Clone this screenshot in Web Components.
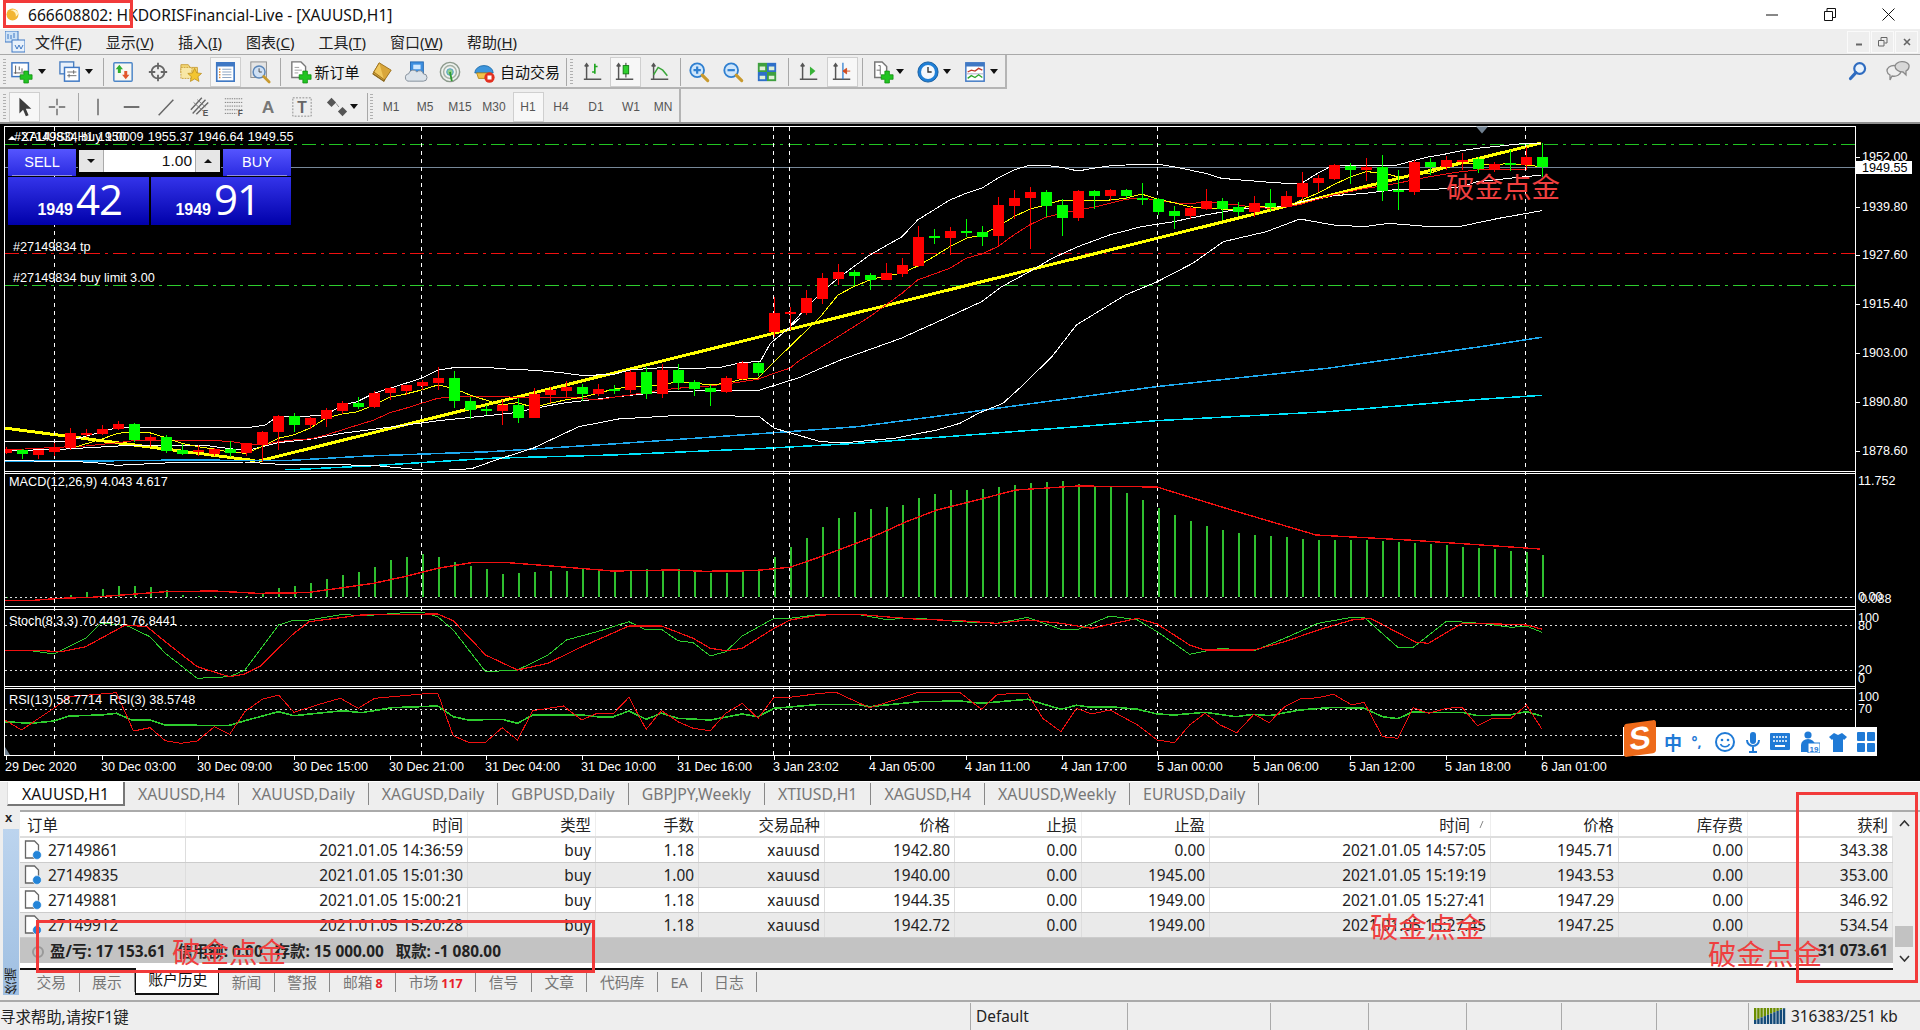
<!DOCTYPE html>
<html lang="zh">
<head>
<meta charset="utf-8">
<title>MetaTrader</title>
<style>
  html, body { margin: 0; height: 100%; background: #eeeeee; overflow: hidden; }
  body {
    position: relative;
    width: 1920px;
    height: 1030px;
    display: flex;
    flex-direction: column;
    font-family: "Noto Sans", "Noto Sans CJK SC", sans-serif;
  }
</style>
</head>
<body>
<mt-title-bar>666608802: HKDORISFinancial-Live - [XAUUSD,H1]</mt-title-bar>
<mt-menu-bar></mt-menu-bar>
<mt-toolbar row="main"></mt-toolbar>
<mt-toolbar row="tools"></mt-toolbar>
<mt-chart></mt-chart>
<mt-chart-tabs></mt-chart-tabs>
<mt-terminal></mt-terminal>
<mt-status-bar>寻求帮助,请按F1键</mt-status-bar>

<mt-ime-bar></mt-ime-bar>

<mt-mark style="left:3px;top:0;width:130px;height:28px"></mt-mark>
<mt-mark style="left:36px;top:920px;width:559px;height:53px"></mt-mark>
<mt-mark style="left:1796px;top:792px;width:122px;height:191px"></mt-mark>
<mt-stamp style="left:1446px;top:168px">破金点金</mt-stamp>
<mt-stamp style="left:172px;top:933px">破金点金</mt-stamp>
<mt-stamp style="left:1370px;top:908px">破金点金</mt-stamp>
<mt-stamp style="left:1708px;top:935px">破金点金</mt-stamp>

<script>
(function () {
  const UI_FONT = `"Noto Sans", "Noto Sans CJK SC", sans-serif`;
  const CHART_FONT = `"Liberation Sans", sans-serif`;

  // toolbar icons, all on a 24x24 box
  const axes = `<path d="M5 3v17M2 20h19M3 6l2-3 2 3" fill="none" stroke="#555" stroke-width="1.6"/>`;
  const plus = `<path d="M14 11h5v4h4v5h-4v4h-5v-4h-4v-5h4z" fill="#22c422" stroke="#0d8a0d" stroke-width=".8"/>`;
  const glass = (mark) => `<circle cx="10" cy="10" r="7.5" fill="#cfe6fb" stroke="#2f7fd0" stroke-width="2"/>${mark}<path d="M15.5 15.5l6 6" stroke="#c99a2e" stroke-width="3.4" stroke-linecap="round"/>`;
  const Icons = {
    newChart: `<rect x="1" y="2" width="18" height="15" fill="#fff" stroke="#3f78c4" stroke-width="1.6"/><path d="M5 5v9M3 13h13M9 6v4M12 8v4" stroke="#555"/>${plus}`,
    profiles: `<rect x="1" y="1" width="15" height="13" fill="#e9f1fb" stroke="#4a7fc0" stroke-width="1.5"/><rect x="6" y="7" width="16" height="15" fill="#fff" stroke="#3f78c4" stroke-width="1.6"/><path d="M9 12h10M9 16h10M16 10v4M11 14v4" stroke="#666"/>`,
    market: `<rect x="2" y="2" width="20" height="20" rx="1" fill="#f7f7f2" stroke="#4c86c8" stroke-width="1.6"/><path d="M8 4l4 5H9.6v4H6.4V9H4z" fill="#2fae2f"/><path d="M15 20l-4-5h2.4v-4h3.2v4H19z" fill="#e2562a"/>`,
    navigator: `<circle cx="12" cy="12" r="7" fill="none" stroke="#666" stroke-width="2"/><path d="M12 2v7M12 15v7M2 12h7M15 12h7" stroke="#666" stroke-width="2"/>`,
    favorites: `<path d="M1 4h8l2 3h8v6H1z" fill="#f3d774" stroke="#c9a03a"/><path d="M1 7h12v12H1z" fill="#f8e7a5" stroke="#c9a03a" stroke-dasharray="2 1"/><path d="M16 8l2.3 5 5.2.6-3.9 3.5 1.1 5.2-4.7-2.7-4.7 2.7 1.1-5.2-3.9-3.5 5.2-.6z" fill="#f3c531" stroke="#b98b1a" stroke-width=".8"/>`,
    terminal: `<rect x="3" y="2" width="19" height="20" fill="#fff" stroke="#3f78c4" stroke-width="1.8"/><rect x="3" y="2" width="19" height="4" fill="#3f78c4"/><path d="M9 9h10M9 12h10M9 15h10M9 18h10" stroke="#8ea6c4" stroke-width="1.2"/><path d="M5.5 9h1.5M5.5 12h1.5M5.5 15h1.5M5.5 18h1.5" stroke="#d9822b" stroke-width="1.4"/>`,
    tester: `<rect x="2" y="1" width="17" height="17" fill="#e4e4e4" stroke="#8a8a8a"/><circle cx="11" cy="12" r="6.5" fill="#cfe0f4" stroke="#5b86b8" stroke-width="1.6"/><path d="M11 8v4h3" stroke="#444" fill="none"/><path d="M16 17l6 6" stroke="#c99a2e" stroke-width="3" stroke-linecap="round"/>`,
    order: `<path d="M2 1h10l5 5v12H2z" fill="#fff" stroke="#777" stroke-width="1.5"/><path d="M5 7h5M5 10h8M5 13h4" stroke="#999"/>${plus}`,
    book: `<path d="M9 2l13 8-8 12-12-8z" fill="#d9a63a" stroke="#9a6f1a"/><path d="M9 2L3 12l11 8" fill="#f0c75c" stroke="#9a6f1a"/><path d="M2 14l12 8 1-2" fill="none" stroke="#8a6a22" stroke-width="1.4"/>`,
    cloud: `<rect x="6" y="1" width="14" height="14" fill="#3d8fe0" stroke="#2468b0"/><rect x="9" y="4" width="8" height="5" fill="#cfe8ff"/><path d="M5 22a4 4 0 0 1-1-8 5 5 0 0 1 9-2 4 4 0 0 1 7 2 4 4 0 0 1 0 8z" fill="#dce3ea" stroke="#7f8a96"/>`,
    signal: `<circle cx="12" cy="12" r="10.5" fill="#eef1ee" stroke="#8d9a8d" stroke-width="1.6"/><circle cx="12" cy="12" r="7" fill="none" stroke="#a5b1a5" stroke-width="1.6"/><circle cx="12" cy="12" r="3.6" fill="#8fd08f" stroke="#4e9ad0"/><path d="M12 12l2 10" stroke="#2f9a2f" stroke-width="2"/>`,
    auto: `<path d="M2 13a10 8 0 0 1 20 0z" fill="#3c95dc" stroke="#1f6cab"/><path d="M4 13h16l-2 6H6z" fill="#f2c24a" stroke="#b48a1e"/><circle cx="18" cy="18" r="5.6" fill="#e33020"/><rect x="15.8" y="15.8" width="4.4" height="4.4" fill="#fff"/>`,
    bars: `${axes}<path d="M14 3v11M11 12h3M14 6h3" stroke="#22a622" stroke-width="1.8" fill="none"/>`,
    candle: `${axes}<path d="M13 2v16" stroke="#222"/><rect x="10" y="5" width="6" height="9" fill="#2fd02f" stroke="#107a10"/>`,
    line: `${axes}<path d="M5 15l5-8 5 3 5 6" fill="none" stroke="#3aa63a" stroke-width="1.6"/>`,
    zoomIn: glass(`<path d="M6 10h8M10 6v8" stroke="#2f7fd0" stroke-width="2.4"/>`),
    zoomOut: glass(`<path d="M6 10h8" stroke="#2f7fd0" stroke-width="2.4"/>`),
    tile: `<rect x="2" y="2" width="10" height="10" fill="#3fa03f"/><rect x="12" y="2" width="10" height="10" fill="#2e6fc9"/><rect x="2" y="12" width="10" height="10" fill="#2e6fc9"/><rect x="12" y="12" width="10" height="10" fill="#3fa03f"/><path d="M4 6h6v4H4zM14 6h6v4h-6zM4 16h6v4H4zM14 16h6v4h-6z" fill="#dff0d8"/>`,
    scroll: `${axes}<path d="M13 6l6 5-6 5z" fill="#37b237"/>`,
    shift: `${axes}<path d="M13 2v18" stroke="#2f7fd0" stroke-width="1.4"/><path d="M21 11h-4v-3l-4 3 4 3v-3" fill="#cf4a1e" stroke="#cf4a1e"/>`,
    addInd: `<path d="M3 1h8l5 5v12H3z" fill="#fff" stroke="#777" stroke-width="1.6"/><path d="M7 5h2v10M5 10h4" stroke="#666" fill="none"/>${plus}`,
    clock: `<circle cx="12" cy="12" r="11" fill="#1f7fd6" stroke="#135a9c"/><circle cx="12" cy="12" r="7.6" fill="#f4f8fc"/><path d="M12 6.5V12h4" stroke="#333" stroke-width="1.5" fill="none"/>`,
    template: `<rect x="2" y="2" width="20" height="20" fill="#fff" stroke="#3f78c4" stroke-width="1.6"/><rect x="2" y="2" width="20" height="4" fill="#3f78c4"/><path d="M4 12l4-2 4 1 4-3 4 2" stroke="#c0392b" fill="none" stroke-width="1.5"/><path d="M2 14h20" stroke="#aac"/><path d="M4 19l4-3 4 2 4-3 4 3" stroke="#2fa82f" fill="none" stroke-width="1.5"/>`,
    cursor: `<path d="M7 2v17l4-4 3 7 3-1-3-7h6z" fill="#3c3c3c"/>`,
    cross: `<path d="M12 3v7M12 14v7M3 12h7M14 12h7" stroke="#666" stroke-width="1.5"/>`,
    vline: `<path d="M12 3v18" stroke="#666" stroke-width="1.6"/>`,
    hline: `<path d="M3 12h17" stroke="#555" stroke-width="1.8"/>`,
    trend: `<path d="M4 21L20 4" stroke="#666" stroke-width="1.6"/>`,
    channel: `<path d="M2 15L14 2M4 19L18 4M8 20L21 7" stroke="#666" stroke-width="1.5"/><path d="M5 7l10 9M9 4l9 8" stroke="#777"/><text x="15" y="22" font-size="9" font-weight="700" fill="#555" font-family="Liberation Sans">E</text>`,
    fibo: `<path d="M2 3h20M2 7h20M2 11h20M2 15h20" stroke="#777" stroke-dasharray="1.5 1"/><path d="M2 19h13" stroke="#777" stroke-dasharray="1.5 1"/><text x="16" y="22" font-size="9" font-weight="700" fill="#555" font-family="Liberation Sans">F</text>`,
    label: `<rect x="2" y="2" width="20" height="20" fill="none" stroke="#888" stroke-dasharray="2 1.5"/><text x="12" y="18" text-anchor="middle" font-size="17" font-weight="700" fill="#666" font-family="Liberation Sans">T</text>`,
    letter: `<text x="12" y="19" text-anchor="middle" font-size="19" font-weight="700" fill="#777" font-family="Liberation Sans">A</text>`,
    arrows: `<path d="M6 2l5 5-5 5-5-5z" fill="#555"/><path d="M18 12l5 5-5 5-5-5z" fill="#555"/><path d="M11 8l3 4" stroke="#888"/>`,
    search: `<circle cx="14" cy="9" r="6.5" fill="#eaf3fc" stroke="#2f6cc0" stroke-width="2.6"/><path d="M9.5 14L3 21" stroke="#2f6cc0" stroke-width="3.8" stroke-linecap="round"/>`,
    chat: `<path d="M2 12a7 5.5 0 0 1 14 0 7 5.5 0 0 1-9 5l-2 4v-5a5 5 0 0 1-3-4z" fill="#eee" stroke="#8a8a8a" stroke-width="1.3"/><path d="M12 8a7.5 6 0 0 1 14-1 6 6 0 0 1-3 6v4l-3-3a8 6 0 0 1-8-6z" fill="#d8d8d8" stroke="#8a8a8a" stroke-width="1.3" transform="translate(-2 -1)"/>`,
  };

  class TitleBar extends HTMLElement {
    constructor() {
      super();
      this.attachShadow({ mode: "open" }).innerHTML = `
        <style>
          :host { display: flex; align-items: center; height: 29px; background: #fff; color: #111; font: 15.6px ${UI_FONT}; flex: none; }
          svg { margin: 0 9px 0 6px; }
          .text { flex: 1; white-space: nowrap; }
          .btn { width: 58px; height: 29px; display: flex; align-items: center; justify-content: center; }
          .controls { display: flex; margin-right: 3px; }
        </style>
        <svg width="13" height="15" viewBox="0 0 12 14"><circle cx="6" cy="7" r="5.6" fill="#f2b632"/><path d="M4 3a5 5 0 0 1 5 6 4 3 0 0 0-5-6z" fill="#fff3c4"/></svg>
        <div class="text"><slot></slot></div>
        <div class="controls">
          <div class="btn"><svg style="margin:0" width="12" height="2"><path d="M0 1h12" stroke="#111"/></svg></div>
          <div class="btn"><svg style="margin:0" width="12" height="13"><path d="M.5 3.5h8v9h-8zM3 3V.5h8.5v9H9" fill="none" stroke="#111"/></svg></div>
          <div class="btn"><svg style="margin:0" width="13" height="13"><path d="M.5.5l12 12M12.5.5l-12 12" stroke="#111"/></svg></div>
        </div>`;
    }
  }

  class MenuBar extends HTMLElement {
    constructor() {
      super();
      const menus = [["文件", "F"], ["显示", "V"], ["插入", "I"], ["图表", "C"], ["工具", "T"], ["窗口", "W"], ["帮助", "H"]];
      this.attachShadow({ mode: "open" }).innerHTML = `
        <style>
          :host { display: flex; align-items: center; height: 25px; background: #eeeeee; color: #222; font: 15px ${UI_FONT}; flex: none; }
          .logo { margin: 0 10px 0 5px; }
          nav { display: flex; gap: 24px; flex: 1; }
          u { text-decoration-thickness: 1px; }
          .mdi { display: flex; gap: 1px; margin-right: 2px; }
          .mdi div { width: 23px; height: 22px; border: 1px solid #fafafa; box-sizing: border-box; display: flex; align-items: center; justify-content: center; }
        </style>
        <svg class="logo" width="20" height="22" viewBox="0 0 20 22"><rect x="0" y="0" width="13" height="11" fill="#cfe3f7" stroke="#3f78c4"/><rect x="7" y="9" width="13" height="12" fill="#e8f1fb" stroke="#3f78c4"/><path d="M3 3v5M6 4v4M9 2v5M10 14l2 4 2-4 2 4 2-4" stroke="#3f78c4" fill="none"/></svg>
        <nav>${menus.map(([name, key]) => `<span>${name}(<u>${key}</u>)</span>`).join("")}</nav>
        <div class="mdi">
          <div><svg width="8" height="8"><path d="M1 6.5h6" stroke="#666" stroke-width="2"/></svg></div>
          <div><svg width="10" height="10"><path d="M.5 3.5h5.5v5.5H.5zM3 3V.5h6v5.5H6.5" fill="none" stroke="#666"/></svg></div>
          <div><svg width="8" height="8"><path d="M1 1l6 6M7 1L1 7" stroke="#666" stroke-width="1.6"/></svg></div>
        </div>`;
    }
  }

  // k: kind, c: centre x on the page
  const ToolRows = {
    main: {
      end: 1007,
      items: [
        { k: "grip", c: 4 }, { i: "newChart", c: 22 }, { k: "arrow", c: 42 }, { i: "profiles", c: 70 }, { k: "arrow", c: 89 },
        { k: "sep", c: 103 }, { i: "market", c: 123 }, { i: "navigator", c: 158 }, { i: "favorites", c: 191 }, { i: "terminal", c: 225, on: 1 },
        { i: "tester", c: 260 }, { k: "sep", c: 280 }, { i: "order", c: 301 }, { t: "新订单", w: 46, c: 337 }, { i: "book", c: 382 },
        { i: "cloud", c: 416 }, { i: "signal", c: 450 }, { i: "auto", c: 484 }, { t: "自动交易", w: 60, c: 530 }, { k: "sep", c: 566 }, { k: "grip", c: 571 },
        { i: "bars", c: 593 }, { i: "candle", c: 625, on: 1 }, { i: "line", c: 660 }, { k: "sep", c: 680 }, { i: "zoomIn", c: 699 }, { i: "zoomOut", c: 733 },
        { i: "tile", c: 767 }, { k: "sep", c: 788 }, { i: "scroll", c: 809 }, { i: "shift", c: 842, on: 1 }, { k: "sep", c: 862 }, { i: "addInd", c: 883 },
        { k: "arrow", c: 900 }, { i: "clock", c: 928 }, { k: "arrow", c: 947 }, { i: "template", c: 975 }, { k: "arrow", c: 994 },
      ],
    },
    tools: {
      end: 681,
      items: [
        { k: "grip", c: 4 }, { i: "cursor", c: 24, on: 1 }, { i: "cross", c: 57 }, { k: "sep", c: 78 }, { i: "vline", c: 98 }, { i: "hline", c: 132 },
        { i: "trend", c: 166 }, { i: "channel", c: 200 }, { i: "fibo", c: 234 }, { i: "letter", c: 268 }, { i: "label", c: 302 }, { i: "arrows", c: 337 },
        { k: "arrow", c: 354 }, { k: "sep", c: 367 }, { k: "grip", c: 371 }, { p: "M1", c: 391 }, { p: "M5", c: 425 }, { p: "M15", c: 460 }, { p: "M30", c: 494 },
        { p: "H1", c: 528, on: 1 }, { p: "H4", c: 561 }, { p: "D1", c: 596 }, { p: "W1", c: 631 }, { p: "MN", c: 663 },
      ],
    },
  };
  const KIND_WIDTH = { sep: 1, grip: 3, arrow: 8 };

  class Toolbar extends HTMLElement {
    connectedCallback() {
      const row = ToolRows[this.getAttribute("row")];
      const isMain = this.getAttribute("row") === "main";
      let right = 0;
      const cells = row.items.map((item) => {
        const width = item.on ? 31 : item.w || KIND_WIDTH[item.k] || (item.p ? 26 : 22);
        const margin = item.c - width / 2 - right;
        right = item.c + width / 2;
        return `<div class="cell" style="width:${width}px;margin-left:${margin}px">${this._item(item)}</div>`;
      });
      this.attachShadow({ mode: "open" }).innerHTML = `
        <style>
          :host { display: flex; flex: none; height: 35px; background: #eeeeee; box-sizing: border-box; ${isMain ? "border-top: 1px solid #a9a9a9;" : "border-bottom: 2px solid #8f8f8f;"} }
          .band { display: flex; width: ${row.end}px; border-right: 2px solid #b4b4b4; border-bottom: ${isMain ? "2px solid #b4b4b4" : "0"}; padding-top: ${isMain ? 1 : 2}px; box-sizing: border-box; }
          .cell { display: flex; align-items: center; justify-content: center; flex: none; }
          svg { overflow: visible; }
          .on { width: 31px; height: 30px; display: flex; align-items: center; justify-content: center; border: 1px solid #cfcfcf; background: #f7f7f7; box-sizing: border-box; }
          .sep { width: 1px; height: 28px; background: #a8a8a8; }
          .grip { width: 3px; height: 26px; background: repeating-linear-gradient(#b0b0b0 0 1px, transparent 1px 3px); }
          .arrow { width: 0; height: 0; border: 4px solid transparent; border-top: 5px solid #111; border-bottom: 0; }
          .label { font: 15px ${UI_FONT}; color: #111; white-space: nowrap; }
          .period { font: 12px ${CHART_FONT}; color: #555; }
          .right { margin-left: auto; display: flex; gap: 17px; align-items: center; padding: 0 9px 2px 0; }
        </style>
        <div class="band">${cells.join("")}</div>
        ${isMain ? `<div class="right"><svg width="20" height="20" viewBox="0 0 24 24">${Icons.search}</svg><svg width="26" height="24" viewBox="0 0 26 24">${Icons.chat}</svg></div>` : ""}`;
    }

    _item(item) {
      if (item.k === "sep") return `<div class="sep"></div>`;
      if (item.k === "grip") return `<div class="grip"></div>`;
      if (item.k === "arrow") return `<div class="arrow"></div>`;
      if (item.t) return `<span class="label">${item.t}</span>`;
      const inner = item.p
        ? `<span class="period">${item.p}</span>`
        : `<svg width="22" height="22" viewBox="0 0 24 24">${Icons[item.i]}</svg>`;
      return item.on ? `<div class="on">${inner}</div>` : inner;
    }
  }

  // candles read off the reference: [green, high, top, bottom, low] in crop rows
  const CANDLES_A = [
    [0,470,478,490,493],[1,478,480,492,507],[0,480,481,495,507],[0,460,471,486,498],[0,414,430,476,480],[0,418,430,436,440],
    [0,405,417,432,434],[0,393,402,417,420],[1,400,402,451,455],[0,435,442,452,472],[1,436,442,483,488],[1,462,480,492,496],
    [0,465,481,483,498],[0,474,477,492,497],[1,453,477,489,502],[0,458,460,489,498],[0,422,427,465,516],[0,376,378,426,480],
    [1,369,378,405,426],[0,380,384,405,417],[0,355,360,387,410],[0,334,339,363,372],[1,322,339,351,358],[0,303,309,351,354],
    [0,290,294,309,330],[0,285,285,303,315],[0,270,276,288,300],[0,230,264,279,300],[1,243,264,333,354],[1,320,333,360,387],
    [1,345,358,362,375],[0,330,345,363,405],[1,325,345,384,399],[0,294,312,384,384],[0,292,300,315,340],[0,273,291,303,325],
    [1,282,291,312,334],[0,282,297,312,318],[1,285,297,300,312],[0,240,245,300,310],[1,232,246,312,327],[0,222,240,312,324],
    [1,222,240,279,300],[1,270,276,297,318],[1,285,294,306,348],[0,258,264,306,309],[0,213,219,267,270],[1,217,219,249,258],
  ].map((c) => [c[0], ...c.slice(1).map((v) => 290 + v / 3)]);
  const CANDLES_B = [
    [0,500,549,605,620],[0,530,546,552,600],[0,480,504,549,555],[0,430,444,507,522],[0,402,426,447,465],[1,420,426,438,468],
    [1,430,435,450,480],[0,400,429,450,450],[0,385,405,432,441],[0,288,321,408,410],[1,297,318,324,342],[0,292,303,324,375],
    [1,267,303,309,321],[1,288,306,321,348],[0,201,225,318,350],[0,180,204,228,267],[0,171,186,204,357],[1,180,186,228,261],
    [1,207,225,264,318],[0,180,183,264,273],[1,180,183,198,237],[0,177,180,198,213],[1,177,180,198,207],[1,159,204,209,225],
    [1,204,207,246,255],[1,228,243,258,297],[0,228,234,258,267],[0,177,213,237,240],[1,204,213,237,270],[1,216,231,246,258],
    [0,197,219,246,261],[1,177,219,231,243],[0,183,198,231,235],[0,126,159,201,210],[0,135,144,159,187],[0,102,105,147,150],
    [1,99,108,120,162],[0,84,111,120,153],[1,75,111,183,213],[1,120,180,186,240],[0,90,96,186,195],[1,85,96,111,135],
    [0,78,90,111,120],[0,70,90,93,120],[1,82,87,117,130],[0,95,102,117,125],[1,60,99,103,123],[0,50,81,105,120],[1,40,81,111,140],
  ].map((c) => [c[0], ...c.slice(1).map((v) => 130 + v / 3)]);
  const CANDLES = CANDLES_A.concat(CANDLES_B);

  // crop coordinates back to page coordinates
  const crop = (x0, y0, sx) => (pts) => pts.map(([px, py]) => [x0 + px / sx, y0 + py / 3]);
  const z5 = crop(0, 320, 1.633);
  const z6 = crop(960, 120, 1.633);
  const z7 = crop(0, 600, 1.633);
  const z8 = crop(960, 600, 1.633);
  const z11 = crop(0, 290, 1.96);
  const z12 = crop(770, 130, 1.985);

  const Lines = {
    fastMA: z11([[150,470],[200,447],[231,430],[262,426],[293,428],[325,443],[356,460],[388,470],[419,477],[450,486],[482,490],[513,470],[545,445],[575,435],[607,415],[639,385],[670,372],[701,365],[733,345],[764,322],[795,312],[826,300],[858,285],[889,295],[921,315],[952,330],[983,345],[1014,338],[1046,352],[1077,340],[1108,330],[1140,322],[1171,310],[1202,298],[1234,290],[1265,288],[1296,285],[1328,275],[1359,278],[1390,285],[1422,280],[1454,268],[1485,265],[1517,215],[1548,170]])
      .concat(z12([[15,690],[100,560],[135,495],[166,470],[198,450],[230,437],[262,430],[293,408],[325,380],[357,350],[389,325],[420,315],[452,290],[484,260],[515,238],[547,225],[579,210],[611,210],[642,210],[674,210],[706,205],[737,192],[769,207],[801,218],[833,230],[864,235],[896,237],[928,237],[960,225],[991,232],[1023,232],[1055,210],[1087,190],[1118,165],[1150,142],[1182,125],[1214,128],[1245,140],[1277,135],[1309,130],[1341,115],[1372,102],[1404,100],[1436,105],[1468,100],[1499,105],[1531,110]]).slice(1)),
    slowMA: z11([[10,480],[137,470],[168,468],[200,463],[231,458],[262,452],[293,452],[325,450],[356,450],[388,450],[419,452],[450,454],[482,462],[513,465],[545,455],[575,450],[610,446],[639,435],[670,420],[701,405],[733,390],[764,368],[795,355],[826,340],[858,325],[889,320],[921,320],[952,320],[983,320],[1014,322],[1046,322],[1077,322],[1108,322],[1140,325],[1171,330],[1202,322],[1234,315],[1265,308],[1296,300],[1328,295],[1359,290],[1390,288],[1422,282],[1454,275],[1485,268],[1517,250],[1548,235],[1568,210]])
      .concat(z12([[60,690],[130,625],[198,560],[262,490],[293,450],[357,415],[389,385],[420,372],[452,350],[484,315],[515,285],[547,262],[579,250],[611,240],[642,232],[674,220],[706,208],[737,204],[769,210],[801,218],[833,222],[864,215],[896,220],[928,225],[960,232],[991,235],[1023,232],[1055,222],[1087,208],[1118,195],[1150,185],[1182,175],[1214,168],[1245,160],[1277,150],[1309,140],[1341,132],[1372,125],[1404,120],[1436,118],[1468,118],[1499,118]])),
    bandTop: z11([[10,455],[130,455],[231,412],[490,412],[520,405],[545,378],[607,378],[640,375],[670,345],[700,335],[733,310],[764,295],[795,280],[826,265],[858,240],[889,233],[950,232],[1000,238],[1050,241],[1100,248],[1140,256],[1200,254],[1234,240],[1296,233],[1360,235],[1410,233],[1454,217],[1490,215],[1510,160],[1530,135],[1568,85]])
      .concat(z12([[40,585],[100,490],[135,445],[166,410],[198,375],[262,320],[293,270],[325,240],[357,210],[389,190],[420,175],[452,145],[484,120],[515,106],[547,106],[579,112],[611,123],[642,115],[674,108],[706,105],[737,102],[769,102],[801,110],[833,120],[864,130],[896,145],[928,149],[960,153],[991,157],[1023,160],[1055,160],[1087,130],[1118,105],[1150,105],[1245,105],[1277,92],[1309,80],[1341,72],[1372,62],[1404,55],[1436,50],[1468,45],[1499,40],[1531,40]])),
    bandMid: z11([[10,482],[120,478],[231,468],[300,466],[400,466],[482,482],[545,458],[607,448],[670,430],[733,418],[795,405],[860,392],[1000,370],[1100,340],[1200,322],[1296,306],[1360,303],[1485,302],[1568,262]])
      .concat(z12([[140,690],[260,625],[355,560],[420,515],[460,470],[515,425],[560,385],[611,350],[674,315],[737,290],[801,275],[864,255],[928,238],[991,232],[1023,230],[1055,215],[1118,197],[1182,190],[1245,178],[1309,180],[1372,170],[1404,155],[1468,145],[1531,135]])),
    bandLow: z5([[8,422],[100,424],[150,427],[190,436],[280,428],[400,426],[465,434],[540,433],[620,438],[690,450],[733,450],[770,446],[810,420],[870,385],[945,320],[1010,297],[1100,287],[1200,288],[1240,290],[1265,325],[1340,365],[1380,368],[1460,355],[1530,330]])
      .concat(z6([[0,910],[30,880],[70,850],[100,800],[150,710],[190,615],[270,525],[322,485],[380,430],[430,365],[500,335],[555,297],[610,315],[660,320],[700,310],[755,318],[820,318],[880,295],[950,272]])),
    blue: z5([[8,423],[150,423],[300,420],[465,422],[600,408],[800,395],[1000,372],[1250,340],[1400,320],[1568,280]])
      .concat(z6([[100,855],[320,800],[600,745],[850,680],[950,652]])),
    cyan: z5([[465,450],[600,438],[800,415],[1000,405],[1250,385],[1400,370],[1568,347]])
      .concat(z6([[320,902],[600,875],[850,838],[950,826]])),
    macdSignal: z5([[8,842],[45,842],[100,835],[150,832],[215,823],[270,815],[350,813],[420,820],[500,818],[560,803],[610,790],[660,770],[715,745],[770,728],[830,728],[900,738],[1000,753],[1100,750],[1150,754],[1230,752],[1290,742],[1340,710],[1420,655],[1480,605],[1530,570],[1568,553]])
      .concat([[1016,490],[1078,486],[1157,487],[1225,508],[1316,535],[1408,540],[1540,549]]),
    stochK: z7([[8,153],[50,152],[88,162],[140,115],[165,70],[205,75],[245,110],[270,160],[322,235],[375,230],[400,210],[455,75],[480,60],[505,60],[560,43],[590,48],[660,38],[690,37],[715,50],[740,90],[793,215],[845,210],[895,165],[925,120],[975,95],[1027,65],[1055,90],[1080,88],[1107,122],[1132,128],[1160,168],[1185,155],[1212,108],[1264,55],[1290,55],[1340,43],[1400,43],[1445,58],[1500,55],[1568,65]])
      .concat(z8([[60,70],[110,52],[165,88],[190,90],[245,48],[290,60],[322,95],[375,163],[425,145],[480,153],[530,115],[585,70],[640,52],[660,52],[715,142],[740,142],[795,63],[850,70],[900,82],[925,78],[950,97]])),
    stochD: z7([[8,152],[70,152],[100,155],[140,140],[165,115],[205,75],[240,80],[270,125],[322,200],[375,230],[400,222],[425,198],[480,100],[505,65],[590,45],[660,43],[715,42],[740,62],[793,165],[845,210],[895,190],[950,140],[1000,100],[1027,78],[1080,78],[1132,115],[1160,145],[1185,152],[1212,145],[1264,85],[1290,60],[1340,45],[1400,43],[1445,50],[1500,58],[1568,62]])
      .concat(z8([[60,70],[110,60],[165,70],[215,85],[290,55],[322,72],[375,135],[400,150],[480,150],[530,125],[585,90],[640,60],[670,55],[745,127],[765,130],[820,70],[880,72],[925,75],[950,87]])),
    rsiSlow: z7([[8,365],[50,370],[88,363],[113,348],[165,345],[190,340],[215,360],[245,360],[270,375],[322,376],[375,376],[400,362],[455,335],[480,347],[560,332],[590,338],[640,323],[715,318],[740,350],[765,360],[820,358],[845,370],[870,345],[950,345],[975,350],[1002,350],[1027,333],[1055,358],[1080,340],[1107,355],[1160,360],[1212,342],[1238,350],[1264,325],[1340,313],[1400,313],[1420,320],[1500,305],[1568,303]])
      .concat(z8([[35,310],[110,298],[165,328],[190,316],[215,322],[245,320],[290,328],[322,342],[350,345],[400,337],[450,350],[480,343],[505,347],[555,330],[610,322],[660,325],[690,350],[715,356],[740,335],[765,338],[820,337],[845,347],[900,344],[925,335],[950,348]])),
    rsiFast: z7([[8,360],[35,390],[88,325],[113,290],[190,278],[218,393],[245,383],[270,422],[295,430],[322,423],[350,380],[375,403],[400,335],[428,298],[455,285],[480,337],[530,308],[556,295],[585,325],[612,295],[640,290],[690,282],[715,280],[740,407],[765,427],[793,427],[820,383],[845,420],[870,332],[920,318],[950,360],[975,340],[1002,340],[1027,292],[1055,388],[1080,332],[1107,365],[1132,385],[1160,392],[1185,340],[1212,310],[1238,355],[1264,292],[1290,292],[1340,280],[1365,277],[1420,323],[1470,295],[1500,277],[1568,278]])
      .concat(z8([[35,328],[60,285],[85,280],[110,280],[135,355],[165,395],[190,325],[215,342],[245,330],[290,375],[322,420],[350,428],[375,375],[400,340],[425,375],[452,398],[480,343],[505,368],[530,320],[555,297],[585,293],[610,283],[640,315],[660,307],[690,410],[715,415],[740,323],[765,340],[795,325],[820,322],[845,377],[870,355],[900,355],[925,315],[950,387]])),
  };

  const MACD_TOPS = [835,830,830,830,825,815,807,798,798,800,810,825,827,828,830,829,822,805,798,788,777,765,757,742,720,710,702,712,727,738,747,762,760,755,752,752,747,752,752,750,748,750,748,752,760,758,750,752,710,682,655,622,595,575,568,562,555,534,522,511]
    .map((v) => 320 + v / 3)
    .concat([490,489,487,485,483,482,481,484,486,487,493,500,508,515,521,526,530,533,535,536,537,539,540,540,540,540,541,542,543,544,545,547,548,549,551,552,555]);

  const TIME_LABELS = ["29 Dec 2020","30 Dec 03:00","30 Dec 09:00","30 Dec 15:00","30 Dec 21:00","31 Dec 04:00","31 Dec 10:00","31 Dec 16:00","3 Jan 23:02","4 Jan 05:00","4 Jan 11:00","4 Jan 17:00","5 Jan 00:00","5 Jan 06:00","5 Jan 12:00","5 Jan 18:00","6 Jan 01:00"];
  const PRICE_LABELS = [["1952.00",157],["1939.80",207],["1927.60",255],["1915.40",304],["1903.00",353],["1890.80",402],["1878.60",451]];
  const PERIOD_X = [54, 421, 773.5, 789, 1157, 1525];

  const poly = (pts, color, width) =>
    `<polyline fill="none" stroke="${color}" stroke-width="${width}" shape-rendering="crispEdges" stroke-linejoin="round" points="${pts.map((p) => p[0].toFixed(1) + "," + p[1].toFixed(1)).join(" ")}"/>`;
  const hLine = (y, x1, x2, color, dash) =>
    `<path d="M${x1} ${y}H${x2}" stroke="${color}" ${dash ? `stroke-dasharray="${dash}"` : ""} shape-rendering="crispEdges"/>`;
  const label = (x, y, text, anchor) =>
    `<text x="${x}" y="${y + 4}" ${anchor ? `text-anchor="${anchor}"` : ""}>${text}</text>`;

  class Chart extends HTMLElement {
    constructor() {
      super();
      this.attachShadow({ mode: "open" }).innerHTML = `
        <style>
          :host { display: block; position: relative; flex: none; height: 657px; background: #000; }
          svg { display: block; }
          text { fill: #fff; font: 12.7px ${CHART_FONT}; white-space: pre; }
          .axis text { font-size: 12.6px; }
          .quote-line { word-spacing: .6px; }
        </style>
        <svg width="1920" height="657" viewBox="0 124 1920 657">${this._draw()}</svg>
        <mt-trade-panel></mt-trade-panel>`;
    }

    _draw() {
      const frame = `
        <clipPath id="main"><rect x="5" y="127" width="1850" height="343"/></clipPath>
        <path d="M4.5 126.5H1855.5V755.5H4.5Z M4 471H1856 M4 473H1856 M4 606.5H1856 M4 609.5H1856 M4 686.5H1856 M4 688.5H1856" fill="none" stroke="#fff" shape-rendering="crispEdges"/>`;
      const periods = PERIOD_X.map((x) => `<path d="M${x} 127V755" stroke="#fff" stroke-dasharray="4 4" shape-rendering="crispEdges"/>`).join("");
      const levels =
        hLine(144.5, 5, 1855, "#22c422", "14 5 3 5") + hLine(253.5, 5, 1855, "#f01010", "14 5 3 5") +
        hLine(285.5, 5, 1855, "#2ecc2e", "14 5 3 5") + hLine(167.5, 5, 1855, "#778899");
      const trend = poly([[4, 428], [255, 460.7]], "#ffff00", 3) + poly([[259, 461], [1541, 143]], "#ffff00", 3);
      const indicators =
        poly(Lines.cyan, "#00e5ff", 1.5) + poly(Lines.blue, "#1eaaf0", 1.5) + poly(Lines.bandLow, "#fff", 1) + poly(Lines.bandMid, "#fff", 1) +
        poly(Lines.bandTop, "#fff", 1) + poly(Lines.slowMA, "#f01010", 1) + poly(Lines.fastMA, "#ffff00", 1);
      const candles = CANDLES.map(([green, high, top, bottom, low], i) => {
        const x = 6 + 16 * i;
        const color = green ? "#00ff00" : "#ff0000";
        return `<path d="M${x}.5 ${high.toFixed(0)}V${low.toFixed(0)}" stroke="${color}"/><rect x="${x - 5}" y="${top.toFixed(0)}" width="11" height="${Math.max(2, bottom - top).toFixed(0)}" fill="${color}"/>`;
      }).join("");
      const macd = MACD_TOPS.map((top, i) => {
        const x = 6 + 16 * i;
        return `<rect x="${x}" y="${Math.min(top, 597).toFixed(0)}" width="2" height="${Math.abs(597 - top).toFixed(0)}" fill="#2fbf2f"/>`;
      }).join("");
      const guides =
        hLine(597.5, 5, 1855, "#ddd", "2 3") + hLine(625.5, 5, 1855, "#ddd", "2 3") + hLine(670.5, 5, 1855, "#ddd", "2 3") +
        hLine(709.5, 5, 1855, "#ddd", "2 3") + hLine(735.5, 5, 1855, "#ddd", "2 3");
      const time = TIME_LABELS.map((text, i) => {
        const x = 6 + 96 * i;
        return `<path d="M${x}.5 755V760" stroke="#fff"/>` + label(x - 1, 767, text);
      }).join("");
      const prices = PRICE_LABELS.map(([text, y]) => `<path d="M1855 ${y}.5h5" stroke="#fff"/>` + label(1862, y, text)).join("");
      return `
        ${frame}
        <g clip-path="url(#main)">${levels}${trend}${indicators}</g>
        ${periods}
        <g clip-path="url(#main)" shape-rendering="crispEdges">${candles}</g>
        ${macd}${guides}
        ${poly(Lines.macdSignal, "#f01010", 1.4)}
        ${poly(Lines.stochK, "#2ecc2e", 1)}${poly(Lines.stochD, "#f01010", 1.2)}
        ${poly(Lines.rsiSlow, "#2ecc2e", 1.6)}${poly(Lines.rsiFast, "#f01010", 1)}
        <path d="M1476 126.5h12l-6 7z" fill="#708090"/>
        <path d="M5 755v-8l5 8z" fill="#708090"/>
        <path d="M8 140l4-4 4 4z" fill="#fff"/>
        ${label(14, 137, "#27149834 buy 1.00")}
        <g class="quote-line">${label(21, 137, "XAUUSD,H1 1950.09 1955.37 1946.64 1949.55")}</g>
        ${label(13, 247, "#27149834 tp")}
        ${label(13, 278, "#27149834 buy limit 3.00")}
        ${label(9, 482, "MACD(12,26,9) 4.043 4.617")}
        ${label(9, 621, "Stoch(8,3,3) 70.4491 76.8441")}
        ${label(9, 700, "RSI(13) 58.7714  RSI(3) 38.5748")}
        <g class="axis">
          ${prices}
          <rect x="1855" y="161" width="57" height="13" fill="#fff"/>
          <text x="1862" y="172" style="fill:#000">1949.55</text>
          ${label(1858, 481, "11.752")}${label(1858, 597, "0.00")}${label(1860, 599, "0.088")}
          ${label(1858, 618, "100")}${label(1858, 626, "80")}${label(1858, 670, "20")}${label(1858, 679, "0")}
          ${label(1858, 697, "100")}${label(1858, 709, "70")}
          ${time}
        </g>`;
    }
  }

  class TradePanel extends HTMLElement {
    constructor() {
      super();
      const arrow = (d) => `<svg width="10" height="6"><path d="${d}" fill="#111"/></svg>`;
      this.attachShadow({ mode: "open" }).innerHTML = `
        <style>
          :host { position: absolute; left: 8px; top: 25px; width: 283px; color: #fff; font-family: ${CHART_FONT}; display: grid; grid-template-columns: 141px 1fr; column-gap: 2px; grid-template-rows: 28px 48px; }
          .top { grid-column: 1 / 3; display: flex; justify-content: space-between; align-items: flex-start; }
          .side { width: 68px; height: 27px; background: linear-gradient(#5555ff, #2a2ae0); display: flex; align-items: center; justify-content: center; font-size: 14.5px; position: relative; box-sizing: border-box; padding-bottom: 2px; }
          .side::after { content: ""; position: absolute; left: 4px; right: 4px; bottom: 0; height: 1px; background: #bbbbdd; opacity: .7; }
          .spin { width: 143px; height: 24px; display: flex; color: #111; font-size: 15.5px; border: 1px solid #000; box-sizing: border-box; background: #fff; }
          .spin div { width: 24px; background: #e6e6e6; display: flex; align-items: center; justify-content: center; }
          .spin output { flex: 1; text-align: right; line-height: 22px; padding-right: 3px; border-left: 1px solid #aaa; border-right: 1px solid #aaa; }
          .quote { background: linear-gradient(#3434ea, #0000aa); display: flex; align-items: baseline; justify-content: flex-end; box-sizing: border-box; padding-top: 1px; }
          .quote.sell { padding-right: 27px; }
          .quote.buy { padding-right: 31px; }
          .quote b { font-size: 16px; margin-right: 3px; }
          .quote span { font-size: 42px; line-height: 42px; font-family: "Open Sans", sans-serif; letter-spacing: -1px; }
        </style>
        <div class="top">
          <div class="side">SELL</div>
          <div class="spin"><div>${arrow("M1 1h8L5 5z")}</div><output>1.00</output><div>${arrow("M1 5h8L5 1z")}</div></div>
          <div class="side">BUY</div>
        </div>
        <div class="quote sell"><b>1949</b><span>42</span></div>
        <div class="quote buy"><b>1949</b><span>91</span></div>`;
    }
  }

  class ChartTabs extends HTMLElement {
    constructor() {
      super();
      const tabs = ["XAUUSD,H1", "XAUUSD,H4", "XAUUSD,Daily", "XAGUSD,Daily", "GBPUSD,Daily", "GBPJPY,Weekly", "XTIUSD,H1", "XAGUSD,H4", "XAUUSD,Weekly", "EURUSD,Daily"];
      this.attachShadow({ mode: "open" }).innerHTML = `
        <style>
          :host { display: flex; flex: none; height: 29px; background: #eeeeee; padding: 0 0 0 7px; box-sizing: border-box; font: 15.8px ${UI_FONT}; color: #777; border-top: 1px solid #fff; }
          span { height: 22px; padding: 0 13px; line-height: 22px; border-right: 1px solid #888; margin-top: 1px; white-space: nowrap; }
          span.active { height: 24px; margin-top: 0; padding: 0 14px; background: #fff; color: #111; border-right: 2px solid #777; border-bottom: 2px solid #777; border-left: 1px solid #ddd; line-height: 24px; box-sizing: border-box; }
        </style>
        ${tabs.map((t, i) => `<span class="${i ? "" : "active"}">${t}</span>`).join("")}`;
    }
  }

  const ORDERS = [
    ["27149861", "2021.01.05 14:36:59", "buy", "1.18", "xauusd", "1942.80", "0.00", "0.00", "2021.01.05 14:57:05", "1945.71", "0.00", "343.38"],
    ["27149835", "2021.01.05 15:01:30", "buy", "1.00", "xauusd", "1940.00", "0.00", "1945.00", "2021.01.05 15:19:19", "1943.53", "0.00", "353.00"],
    ["27149881", "2021.01.05 15:00:21", "buy", "1.18", "xauusd", "1944.35", "0.00", "1949.00", "2021.01.05 15:27:41", "1947.29", "0.00", "346.92"],
    ["27149912", "2021.01.05 15:20:28", "buy", "1.18", "xauusd", "1942.72", "0.00", "1949.00", "2021.01.05 15:27:45", "1947.25", "0.00", "534.54"],
  ];
  const HEADERS = ["订单", "时间", "类型", "手数", "交易品种", "价格", "止损", "止盈", "时间", "价格", "库存费", "获利"];

  class Terminal extends HTMLElement {
    constructor() {
      super();
      const docIcon = `<svg width="18" height="20" viewBox="0 0 18 20"><path d="M1.5 1h9l4 4v13h-13z" fill="#fff" stroke="#666" stroke-width="1.3"/><circle cx="13" cy="15" r="4.4" fill="#2384d8" stroke="#fff" stroke-width=".6"/></svg>`;
      const head = HEADERS.map((h, i) => `<div class="cell">${h}${i === 8 ? `<svg class="sort" width="5" height="7"><path d="M1 7l3-7" stroke="#888"/></svg>` : ""}</div>`).join("");
      const rows = ORDERS.map((row, n) => `
        <div class="row ${n % 2 ? "alt" : ""}">
          ${row.map((v, i) => `<div class="cell">${i ? v : docIcon + `<span>${v}</span>`}</div>`).join("")}
        </div>`).join("");
      this.attachShadow({ mode: "open" }).innerHTML = `
        <style>
          :host { display: grid; grid-template-columns: 20px 1fr; flex: none; height: 190px; background: #eeeeee; font: 15.4px ${UI_FONT}; color: #222; }
          .rail { position: relative; }
          .close { position: absolute; left: 5px; top: 0; font: 700 13px ${CHART_FONT}; }
          .title { position: absolute; left: 3px; top: 19px; bottom: 5px; width: 16px; background: linear-gradient(#bcd4ee, #9fbfe2); }
          .title span { position: absolute; bottom: 1px; left: 1px; writing-mode: vertical-rl; transform: rotate(180deg); font-size: 13px; line-height: 14px; }
          .main { display: flex; flex-direction: column; min-width: 0; }
          .top { display: flex; height: 158px; border-top: 2px solid #aaa; box-sizing: border-box; }
          .table { width: 1873px; background: #fff; height: 156px; }
          .row { display: grid; height: 25px; grid-template-columns: 166px 282px 128px 103px 126px 130px 127px 128px 281px 128px 129px 145px; border-bottom: 1px solid #ccc; box-sizing: border-box; }
          .row.head { height: 26px; color: #222; border-bottom: 2px solid #ddd; }
          .row.head .cell { border-right-color: #eee; }
          .row.alt { background: #eaeaea; }
          .cell { display: flex; align-items: center; justify-content: flex-end; gap: 6px; padding-right: 4px; border-right: 1px solid #ddd; white-space: nowrap; min-width: 0; overflow: hidden; }
          .cell:first-child { justify-content: flex-start; padding-left: 4px; }
          .row.head .cell:first-child { padding-left: 7px; }
          .row.head .cell:nth-child(9) { padding-right: 6px; }
          .sort { margin-left: 3px; }
          .total { height: 25px; background: #c3c3c3; display: flex; justify-content: space-between; align-items: center; font-weight: 700; padding: 0 5px 0 12px; }
          .total i { display: inline-block; width: 8px; height: 8px; border-radius: 50%; border: 2px solid #999; margin-right: 6px; vertical-align: -1px; }
          .total span span { margin-right: 12px; }
          .scroll { flex: 1; position: relative; }
          .scroll svg { position: absolute; left: 6px; }
          .thumb { position: absolute; left: 2px; width: 18px; top: 114px; height: 21px; background: #c2c2c2; }
          mt-bottom-tabs { flex: 1; }
        </style>
        <div class="rail">
          <div class="close">x</div>
          <div class="title"><span>终端</span></div>
        </div>
        <div class="main">
          <div class="top">
            <div class="table">
              <div class="row head">${head}</div>
              ${rows}
              <div class="total">
                <span><i></i><span>盈/亏: 17 153.61</span><span>信用额: 0.00</span><span>存款: 15 000.00</span><span>取款: -1 080.00</span></span>
                <span>31 073.61</span>
              </div>
            </div>
            <div class="scroll">
              <svg style="top:8px" width="11" height="7"><path d="M1 6l4.5-5L10 6" fill="none" stroke="#333" stroke-width="1.6"/></svg>
              <div class="thumb"></div>
              <svg style="top:143px" width="11" height="7"><path d="M1 1l4.5 5L10 1" fill="none" stroke="#333" stroke-width="1.6"/></svg>
            </div>
          </div>
          <mt-bottom-tabs></mt-bottom-tabs>
        </div>`;
    }
  }

  class BottomTabs extends HTMLElement {
    constructor() {
      super();
      const tabs = [["交易"], ["展示"], ["账户历史"], ["新闻"], ["警报"], ["邮箱", "8"], ["市场", "117"], ["信号"], ["文章"], ["代码库"], ["EA"], ["日志"]];
      this.attachShadow({ mode: "open" }).innerHTML = `
        <style>
          :host { display: flex; padding-left: 4px; height: 32px; box-sizing: border-box; font: 14.8px ${UI_FONT}; color: #777; }
          .strip { display: flex; flex: 1; border-top: 2px solid #111; height: 27px; box-sizing: border-box; max-width: 1873px; margin-left: -4px; padding-left: 4px; }
          span { padding: 0 12.5px; height: 20px; line-height: 20px; border-right: 1px solid #888; margin-top: 2px; white-space: nowrap; }
          span.active { background: #fff; color: #111; height: 27px; line-height: 22px; margin-top: -2px; border: 1px solid #111; border-top: 0; border-bottom-width: 2px; box-sizing: border-box; padding: 0 12px; width: 84px; }
          b { color: #e8212a; font-size: 12.5px; margin-left: 3px; }
        </style>
        <div class="strip">
          ${tabs.map(([t, n], i) => `<span class="${i === 2 ? "active" : ""}">${t}${n ? `<b>${n}</b>` : ""}</span>`).join("")}
        </div>`;
    }
  }

  class StatusBar extends HTMLElement {
    constructor() {
      super();
      const bars = Array.from({ length: 10 }, (_, i) => {
        const h = 4 + i * 1.3;
        return `<rect x="${i * 3.2}" y="0" width="2.4" height="${16 - h}" fill="#6b8e00"/><rect x="${i * 3.2}" y="${16 - h}" width="2.4" height="${h}" fill="#134a78"/>`;
      }).join("");
      this.attachShadow({ mode: "open" }).innerHTML = `
        <style>
          :host { display: grid; flex: none; height: 30px; grid-template-columns: 970px 157px 143px 98px 98px 95px 95px 92px 1fr; background: #eeeeee; border-top: 2px solid #aaa; box-sizing: border-box; font: 15.4px ${UI_FONT}; color: #222; align-items: center; }
          div { height: 27px; display: flex; align-items: center; gap: 5px; white-space: nowrap; }
          div + div { border-left: 1px solid #aaa; padding-left: 5px; box-sizing: border-box; }
          div:first-child { padding-left: 2px; }
        </style>
        <div><slot></slot></div>
        <div>Default</div><div></div><div></div><div></div><div></div><div></div><div></div>
        <div><svg width="32" height="16">${bars}</svg>316383/251 kb</div>`;
    }
  }

  class ImeBar extends HTMLElement {
    constructor() {
      super();
      this.attachShadow({ mode: "open" }).innerHTML = `
        <style>
          :host { position: absolute; left: 1623px; top: 727px; width: 254px; height: 29px; background: #fff; display: flex; align-items: center; gap: 9.5px; color: #1f7ad6; font: 700 16px ${UI_FONT}; }
          .logo { position: absolute; left: 1px; top: -5px; width: 32px; height: 33px; background: #ee6a1a; transform: skewY(-8deg); color: #fff; font: 700 32px/33px ${CHART_FONT}; text-align: center; border-radius: 3px; }
          .cn { margin-left: 41px; font-size: 18px; }
          .punc { width: 14px; font-size: 14px; }
          svg { fill: #1f7ad6; flex: none; }
        </style>
        <div class="logo">S</div>
        <span class="cn">中</span>
        <span class="punc">°,</span>
        <svg width="20" height="22" viewBox="0 0 20 22"><circle cx="10" cy="11" r="9" fill="none" stroke="#1f7ad6" stroke-width="2"/><circle cx="7" cy="9" r="1.3"/><circle cx="13" cy="9" r="1.3"/><path d="M5.5 13a5 5 0 0 0 9 0" fill="none" stroke="#1f7ad6" stroke-width="1.6"/></svg>
        <svg width="16" height="22" viewBox="0 0 16 22"><rect x="5" y="1" width="6" height="12" rx="3"/><path d="M2 9a6 6 0 0 0 12 0M8 15v5M4 21h8" fill="none" stroke="#1f7ad6" stroke-width="2"/></svg>
        <svg width="20" height="18" viewBox="0 0 20 18"><rect width="20" height="17" rx="1"/><path d="M3 4h14M3 8h14" stroke="#fff" stroke-dasharray="2 1" stroke-width="1.6"/><path d="M5 13h10" stroke="#fff" stroke-width="2"/></svg>
        <svg width="20" height="22" viewBox="0 0 20 22"><circle cx="8" cy="4" r="3.6"/><path d="M1 14a7 6 0 0 1 14 0v7H1z"/><rect x="8" y="12" width="12" height="10" fill="#fff" stroke="#1f7ad6"/><text x="14" y="20.5" text-anchor="middle" font-size="8" font-family="Liberation Sans" fill="#1f7ad6">19</text></svg>
        <svg width="18" height="20" viewBox="0 0 18 20"><path d="M5 1l4 2 4-2 5 4-3 3-1-1v13H4V7L3 8 0 5z"/></svg>
        <svg width="18" height="20" viewBox="0 0 18 20"><rect width="8" height="9" rx="1"/><rect x="10" width="8" height="9" rx="1"/><rect y="11" width="8" height="9" rx="1"/><rect x="10" y="11" width="8" height="9" rx="1"/></svg>`;
    }
  }

  class Mark extends HTMLElement {
    constructor() {
      super();
      this.attachShadow({ mode: "open" }).innerHTML = `
        <style>
          :host { position: absolute; display: block; border: 3px solid #f23a3a; box-sizing: border-box; pointer-events: none; }
        </style>`;
    }
  }

  class Stamp extends HTMLElement {
    constructor() {
      super();
      this.attachShadow({ mode: "open" }).innerHTML = `
        <style>
          :host { position: absolute; display: block; color: #ef3f3f; font: 28.5px/36px "Noto Sans CJK SC", sans-serif; white-space: nowrap; }
        </style>
        <slot></slot>`;
    }
  }

  customElements.define("mt-title-bar", TitleBar);
  customElements.define("mt-menu-bar", MenuBar);
  customElements.define("mt-toolbar", Toolbar);
  customElements.define("mt-trade-panel", TradePanel);
  customElements.define("mt-chart", Chart);
  customElements.define("mt-chart-tabs", ChartTabs);
  customElements.define("mt-bottom-tabs", BottomTabs);
  customElements.define("mt-terminal", Terminal);
  customElements.define("mt-status-bar", StatusBar);
  customElements.define("mt-ime-bar", ImeBar);
  customElements.define("mt-mark", Mark);
  customElements.define("mt-stamp", Stamp);
})();
</script>
</body>
</html>
